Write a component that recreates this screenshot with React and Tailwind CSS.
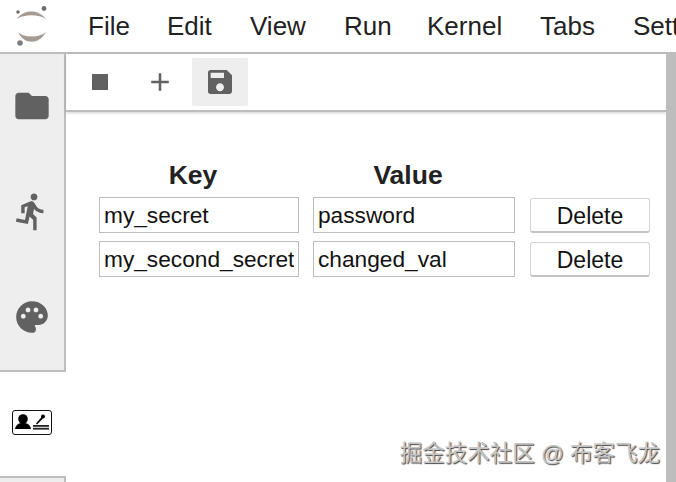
import React from 'react';
import { MdFolder, MdDirectionsRun, MdPalette, MdSave, MdStop, MdAdd } from 'react-icons/md';

const menus = [
    { label: 'File', width: 'w-[79px]' },
    { label: 'Edit', width: 'w-[83px]' },
    { label: 'View', width: 'w-[94px]' },
    { label: 'Run', width: 'w-[83px]' },
    { label: 'Kernel', width: 'w-[113px]' },
    { label: 'Tabs', width: 'w-[93px]' },
    { label: 'Settings', width: 'w-[100px]' },
];

const secrets = [
    { key: 'my_secret', value: 'password' },
    { key: 'my_second_secret', value: 'changed_val' },
];

function Logo() {
    return (
        <svg width="34" height="40" viewBox="0 0 34 40" className="shrink-0">
            <path d="M2 13 C8 3 24 3 31 13 C24 8 9 8 2 13 Z" fill="#a59b94" />
            <path d="M3 26 C9 39 24 39 31 26 C24 32 9 32 3 26 Z" fill="#a59b94" />
            <circle cx="29" cy="2.5" r="2.4" fill="#6f6f6f" />
            <circle cx="3" cy="6" r="1.8" fill="#6f6f6f" />
            <circle cx="5" cy="37" r="2.8" fill="#7d7d7d" />
        </svg>
    );
}

function ContactIcon() {
    return (
        <svg width="40" height="25" viewBox="0 0 40 25">
            <rect x="0.5" y="0.5" width="39" height="24" rx="2.5" fill="#fff" stroke="#111" />
            <circle cx="11" cy="9" r="4.8" fill="#000" />
            <path d="M3 19 C4 14 7 13 11 13 C15 13 18 14 19 19 Z" fill="#000" />
            <path d="M24 13.5 L29.5 7 L31 8.5 L25 14.5 Z" fill="#000" />
            <circle cx="31" cy="6.5" r="2" fill="#000" />
            <rect x="21" y="15" width="16" height="1.8" fill="#222" />
            <rect x="21" y="17.8" width="16" height="1.8" fill="#222" />
        </svg>
    );
}

function SideTab({ children, className }) {
    return <div className={`flex items-center justify-center ${className}`}>{children}</div>;
}

export default function App() {
    return (
        <div className="relative flex flex-col w-[676px] h-[482px] overflow-hidden bg-white text-[#222] font-['Liberation_Sans',sans-serif]">
            <header className="flex items-center h-[54px] shrink-0 border-b-2 border-[#bdbdbd] pl-[15px] overflow-hidden">
                <Logo />
                <nav className="flex ml-[39px] text-[26px] leading-none text-[#222] whitespace-nowrap">
                    {menus.map((m) => (
                        <span key={m.label} className={`shrink-0 ${m.width}`}>{m.label}</span>
                    ))}
                </nav>
            </header>

            <div className="flex flex-1 min-h-0">
                <aside className="flex flex-col w-[66px] shrink-0">
                    <div className="flex flex-col h-[318px] bg-[#eeeeee] border-r-2 border-b-2 border-[#bdbdbd] text-[#616161]">
                        <SideTab className="h-[104px]"><MdFolder size={40} /></SideTab>
                        <SideTab className="h-[104px] pt-[3px] pr-[2px]"><MdDirectionsRun size={41} /></SideTab>
                        <SideTab className="h-[106px] pt-[4px]"><MdPalette size={38} /></SideTab>
                    </div>
                    <SideTab className="h-[104px] bg-white pb-[3px] pr-[2px]"><ContactIcon /></SideTab>
                    <div className="flex-1 bg-[#eeeeee] border-r-2 border-t-2 border-[#bdbdbd]" />
                </aside>

                <main className="flex flex-col flex-1 min-w-0">
                    <div className="flex items-center h-[58px] shrink-0 border-b-2 border-[#bdbdbd] shadow-[0_1px_3px_rgba(0,0,0,0.18)] text-[#616161] pl-[4px]">
                        <button className="flex items-center justify-center w-[60px] h-[52px]"><MdStop size={32} /></button>
                        <button className="flex items-center justify-center w-[60px] h-[52px]"><MdAdd size={30} /></button>
                        <button className="flex items-center justify-center w-[56px] h-[48px] ml-[2px] rounded-[2px] bg-[#eeeeee]"><MdSave size={32} /></button>
                    </div>

                    <div className="pt-[48px] pl-[33px]">
                        <div className="grid grid-cols-[200px_202px_120px] gap-x-[14px] gap-y-[8px] items-center">
                            <div className="h-[29px] flex items-center justify-center pt-[2px] pr-[12px] text-[26.5px] font-bold text-[#222]">Key</div>
                            <div className="h-[29px] flex items-center justify-center pt-[2px] pr-[12px] text-[26.5px] font-bold text-[#222]">Value</div>
                            <div className="h-[29px]" />
                            {secrets.map((s) => (
                                <React.Fragment key={s.key}>
                                    <input readOnly value={s.key} className="w-full h-[36px] px-[4px] pt-[1px] border border-[#bdbdbd] text-[22.7px] text-[#111] outline-none" />
                                    <input readOnly value={s.value} className="w-full h-[36px] px-[4px] pt-[1px] border border-[#bdbdbd] text-[22.7px] text-[#111] outline-none" />
                                    <button className="w-full h-[35px] self-end ml-[1px] rounded-[3px] border border-[#d4d4d4] border-b-2 border-b-[#c4c4c4] bg-white text-[23px] text-[#111]">Delete</button>
                                </React.Fragment>
                            ))}
                        </div>
                    </div>
                </main>

                <div className="w-[10px] shrink-0 bg-[#bdbdbd]" />
            </div>

            <div className="absolute right-[16px] bottom-[17px] text-[22.5px] leading-none text-[#c4c4c4] whitespace-nowrap font-['Liberation_Sans','Noto_Sans_CJK_SC',sans-serif] [text-shadow:1px_1px_1px_#444]">
                掘金技术社区 @ 布客飞龙
            </div>
        </div>
    );
}
